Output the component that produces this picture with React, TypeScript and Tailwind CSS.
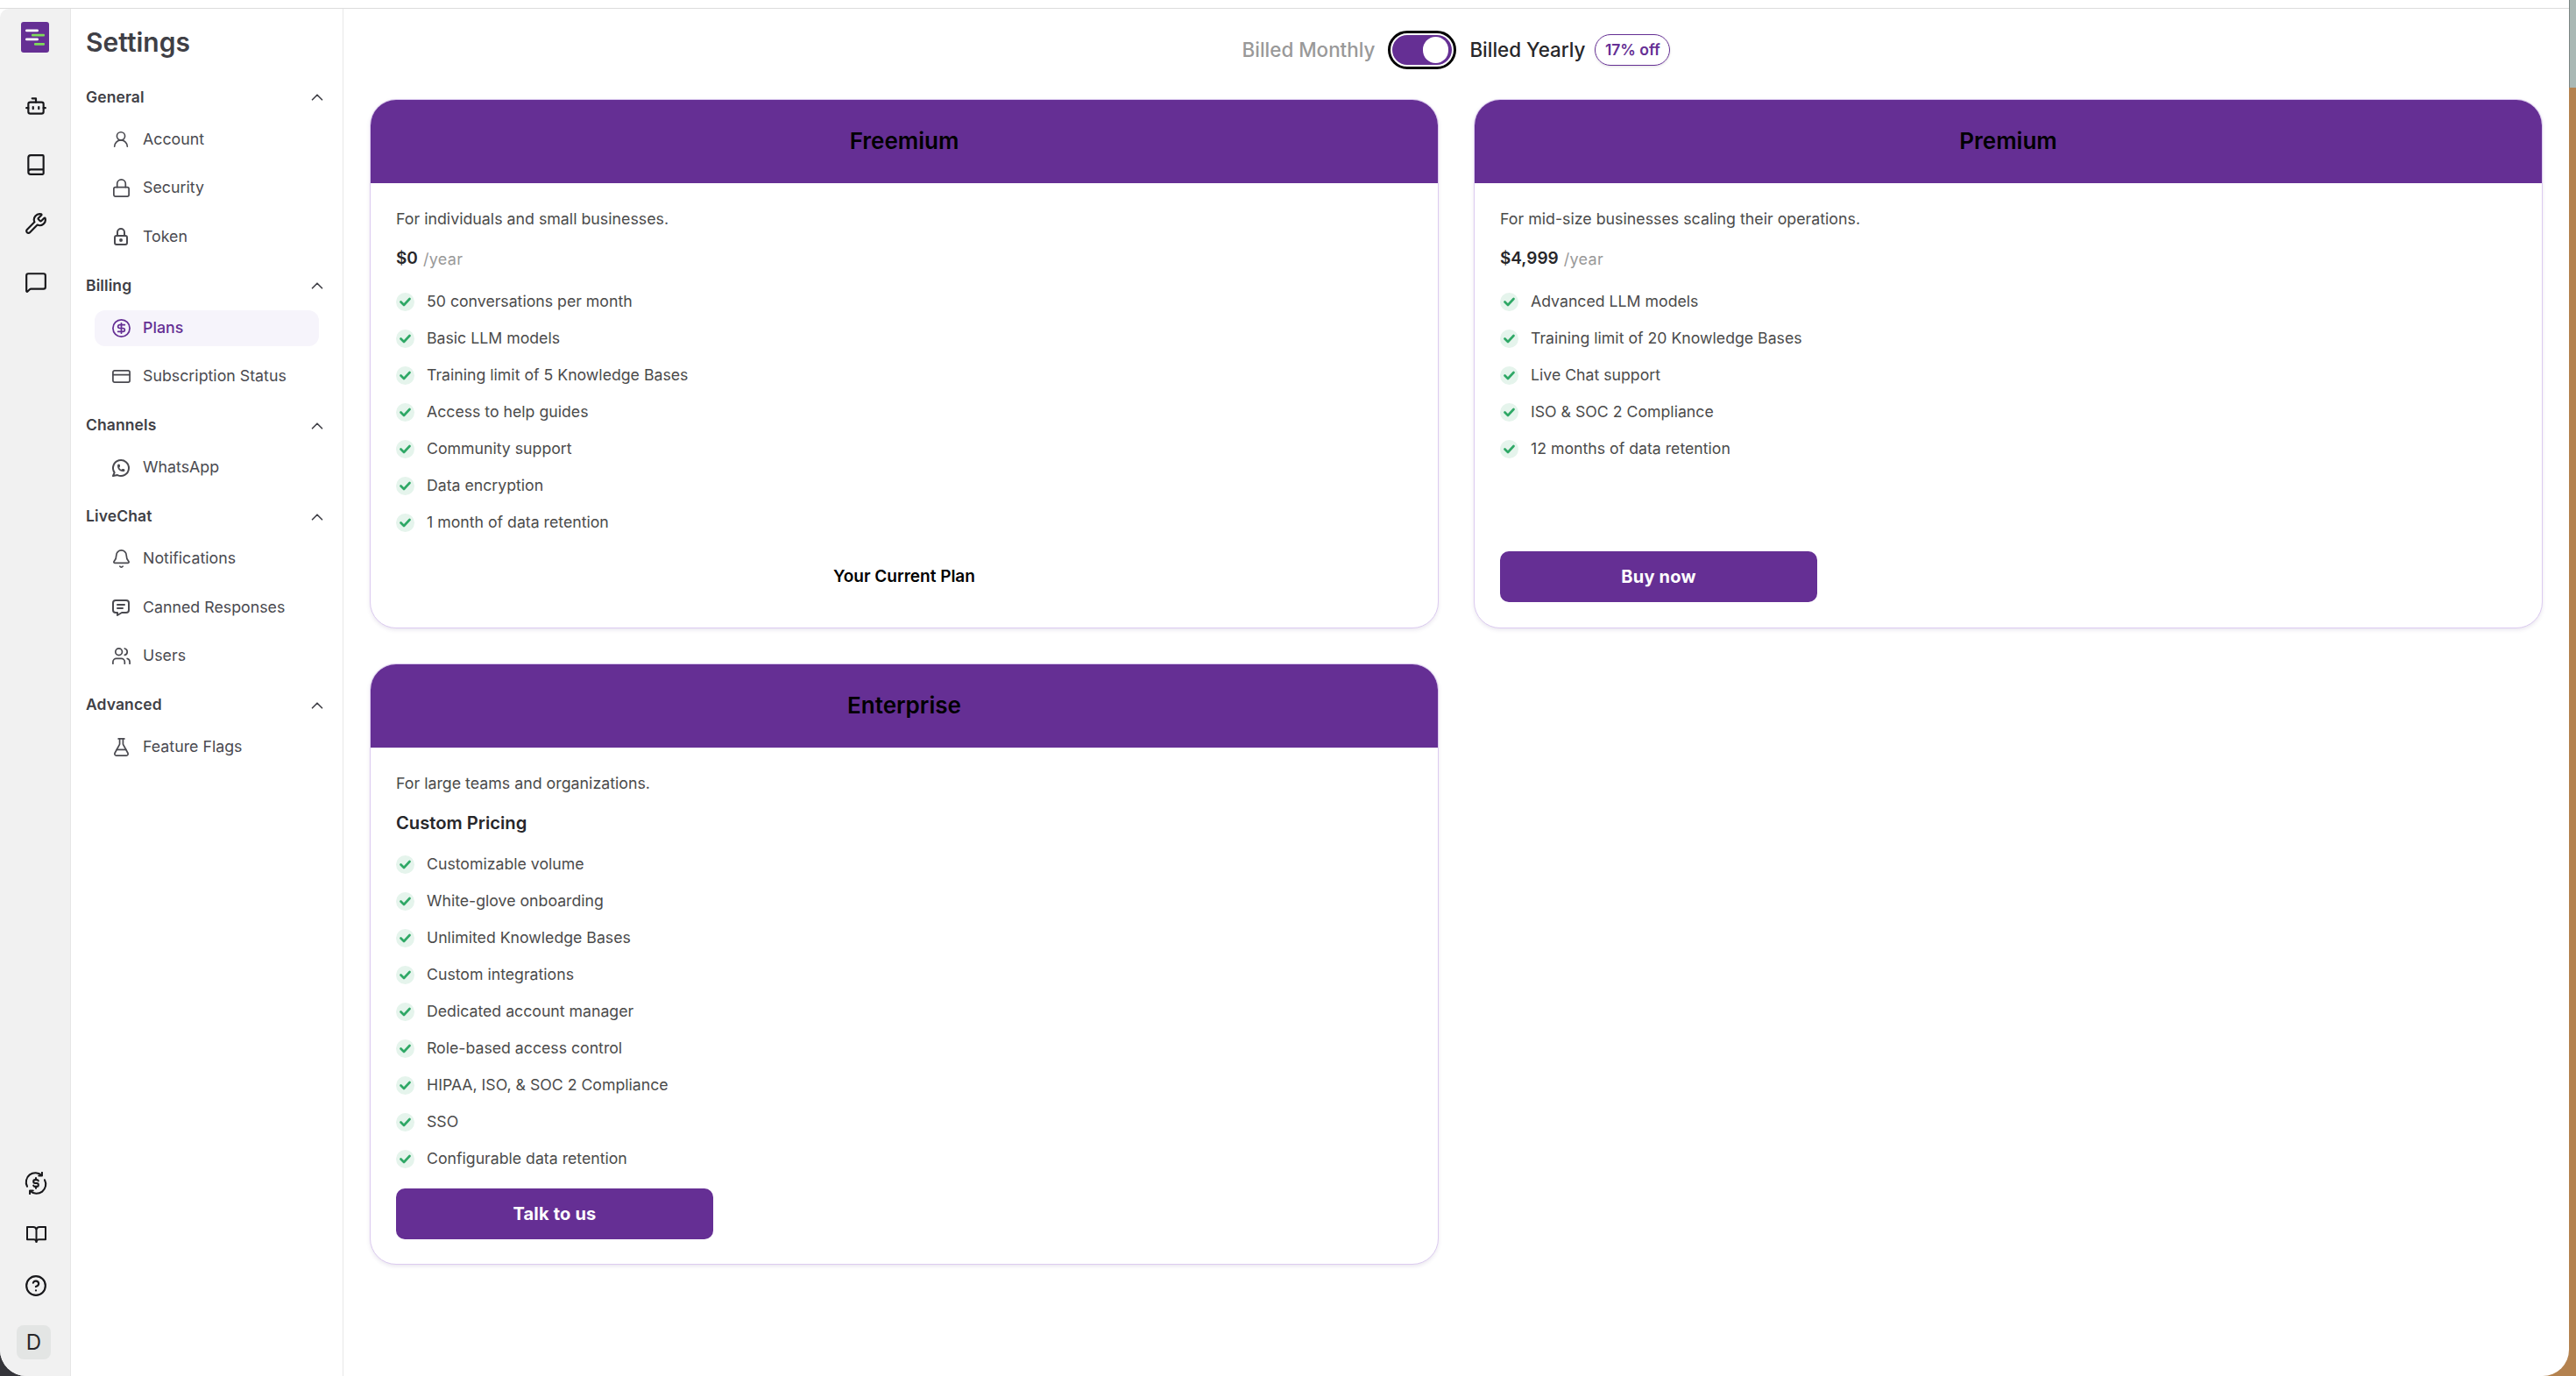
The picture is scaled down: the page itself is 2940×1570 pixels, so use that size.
import { Book, Bot, ChevronUp, CircleDollarSign, CircleHelp, CreditCard, FlaskConical, Bell, Lock, MessageSquare, Users, UserRound, Wrench } from 'lucide-react';
import { TbBrandWhatsapp, TbLock, TbMessage } from 'react-icons/tb';
import type { ReactNode } from 'react';

const font = 'font-["Inter","Liberation_Sans",sans-serif]';

function Logo() {
  return (
    <svg width="32" height="35" viewBox="0 0 32 35">
      <rect width="32" height="35" rx="3" fill="#652f94" />
      <rect x="5" y="8.5" width="15" height="2.8" rx="1.4" fill="#fff" />
      <rect x="12" y="13.7" width="15" height="2.8" rx="1" fill="#7fdc5a" />
      <rect x="5" y="18.5" width="15" height="2.8" rx="1.4" fill="#fff" />
      <rect x="15" y="24" width="12" height="2.8" rx="1" fill="#7fdc5a" />
    </svg>
  );
}

function MoneySwap() {
  return (
    <svg width="26" height="26" viewBox="0 0 24 24" fill="none" stroke="#18181b" strokeWidth="1.9" strokeLinecap="round" strokeLinejoin="round">
      <path d="M2.8 15.5A9.8 9.8 0 0 1 18 3.6" />
      <path d="M21.2 8.5A9.8 9.8 0 0 1 6 20.4" />
      <path d="M18.4 .8v3.4H15" />
      <path d="M5.6 23.2v-3.4H9" />
      <path d="M14.6 9.6a1.9 1.9 0 0 0-1.8-1.2h-1.6a1.8 1.8 0 0 0 0 3.6h1.6a1.8 1.8 0 0 1 0 3.6h-1.6a1.9 1.9 0 0 1-1.8-1.2" />
      <path d="M12 6.6v1.8M12 15.6v1.8" />
    </svg>
  );
}

function OpenBook() {
  return (
    <svg width="23" height="21" viewBox="0 0 24 22" fill="none" stroke="#18181b" strokeWidth="2.1" strokeLinecap="round" strokeLinejoin="round">
      <path d="M1 2h7a4 4 0 0 1 4 2.5A4 4 0 0 1 16 2h7v15h-8a3 3 0 0 0-3 3 3 3 0 0 0-3-3H1z" />
      <path d="M12 4.5V20" />
    </svg>
  );
}

const navGroups = [
  {
    title: 'General',
    items: [
      { label: 'Account', icon: <UserRound size={22} strokeWidth={1.8} /> },
      { label: 'Security', icon: <Lock size={23} strokeWidth={1.8} /> },
      { label: 'Token', icon: <TbLock size={24} /> },
    ],
  },
  {
    title: 'Billing',
    items: [
      { label: 'Plans', icon: <CircleDollarSign size={23} strokeWidth={1.8} />, active: true },
      { label: 'Subscription Status', icon: <CreditCard size={23} strokeWidth={1.8} /> },
    ],
  },
  { title: 'Channels', items: [{ label: 'WhatsApp', icon: <TbBrandWhatsapp size={24} /> }] },
  {
    title: 'LiveChat',
    items: [
      { label: 'Notifications', icon: <Bell size={23} strokeWidth={1.8} /> },
      { label: 'Canned Responses', icon: <TbMessage size={24} /> },
      { label: 'Users', icon: <Users size={23} strokeWidth={1.8} /> },
    ],
  },
  { title: 'Advanced', items: [{ label: 'Feature Flags', icon: <FlaskConical size={23} strokeWidth={1.8} /> }] },
];

function Rail() {
  return (
    <aside className="flex w-[81px] shrink-0 flex-col items-center rounded-tl-[10px] border-r border-[#e6e6e6] bg-[#f1f1f1] pt-[15px] pb-[19px]">
      <div className="flex h-[35px]"><Logo /></div>
      <div className="mt-[48px] flex flex-col items-center gap-[41px] pl-[2px] text-[#18181b]">
        <Bot size={26} strokeWidth={2} />
        <Book size={26} strokeWidth={2} />
        <Wrench size={26} strokeWidth={2} />
        <MessageSquare size={26} strokeWidth={2} />
      </div>
      <div className="mt-auto flex flex-col items-center gap-[32.5px] pl-[2px]">
        <span className="flex h-[26px] items-center"><MoneySwap /></span>
        <span className="flex h-[26px] items-center"><OpenBook /></span>
        <span className="flex h-[26px] items-center"><CircleHelp size={26} strokeWidth={2} className="text-[#18181b]" /></span>
      </div>
      <div className="mt-[32px] mr-[3px] flex h-[39px] w-[39px] items-center justify-center rounded-[8px] bg-[#e3e5e4] text-[24px] text-[#27272a]">D</div>
    </aside>
  );
}

function Sidebar() {
  return (
    <nav className="w-[311px] shrink-0 border-r border-[#e8e8e8] bg-white pl-[17px] pr-[18px]">
      <h1 className="mt-[16px] text-[30px] leading-[44px] font-semibold text-[#3f3f46]">Settings</h1>
      <div className="mt-[30px] flex flex-col gap-[24.5px]">
        {navGroups.map((group) => (
          <section key={group.title}>
            <div className="flex h-[22px] items-center justify-between">
              <span className="text-[17.5px] font-semibold tracking-[0.1px] text-[#3f3f46]">{group.title}</span>
              <ChevronUp size={22} strokeWidth={1.8} className="text-[#3f3f46]" />
            </div>
            <ul className="mt-[16.5px] flex flex-col gap-[14.5px]">
              {group.items.map((item) => (
                <li
                  key={item.label}
                  className={`ml-[10px] flex h-[41px] w-[256px] items-center gap-[13px] rounded-[12px] pl-[18px] text-[17.8px] ${
                    item.active ? 'bg-[#f6f4fb] font-medium text-[#652f94]' : 'text-[#4a4a50]'
                  }`}
                >
                  <span className="flex w-[24px] justify-center">{item.icon}</span>
                  {item.label}
                </li>
              ))}
            </ul>
          </section>
        ))}
      </div>
    </nav>
  );
}

function Feature({ children }: { children: ReactNode }) {
  return (
    <li className="flex h-[21px] items-center gap-[14px] text-[17.7px] text-[#4b4b4b]">
      <span className="flex h-[21px] w-[21px] shrink-0 items-center justify-center rounded-full bg-[#e5f4ec]">
        <svg width="13" height="11" viewBox="0 0 13 11" fill="none" stroke="#2fa866" strokeWidth="2.6" strokeLinecap="round" strokeLinejoin="round">
          <path d="M1.5 5.5l3.5 3.5 6.5-7" />
        </svg>
      </span>
      {children}
    </li>
  );
}

function PlanCard({ title, description, price, custom, features, footer }: {
  title: string;
  description: string;
  price?: string;
  custom?: string;
  features: string[];
  footer: ReactNode;
}) {
  return (
    <section className="flex h-full flex-col overflow-hidden rounded-[30px] border border-[#dccbf0] bg-white shadow-[0_2px_4px_rgba(80,60,120,0.12)]">
      <header className="-mx-[1px] -mt-[1px] flex h-[96px] items-center justify-center bg-[#652f94] pb-[1px] text-[26px] font-semibold text-black">{title}</header>
      <div className="flex flex-1 flex-col px-[29px]">
        <p className="mt-[31px] text-[17.8px] leading-[20px] text-[#4b4b4b]">{description}</p>
        {price ? (
          <p className="mt-[25px] flex h-[20px] items-center gap-[6px] text-[#999]">
            <span className="text-[19px] font-semibold text-[#27272a]">{price}</span>
            <span className="text-[18px] tracking-[0.3px]">/year</span>
          </p>
        ) : (
          <p className="mt-[22px] h-[26px] text-[20.2px] leading-[26px] font-semibold text-[#27272a]">{custom}</p>
        )}
        <ul className={`flex flex-col gap-[21px] ${price ? 'mt-[29px]' : 'mt-[24px]'}`}>
          {features.map((f) => <Feature key={f}>{f}</Feature>)}
        </ul>
        <div className={`mt-auto ${price ? 'pb-[29.5px]' : 'pb-[28.5px]'}`}>{footer}</div>
      </div>
    </section>
  );
}

function PlanButton({ children }: { children: ReactNode }) {
  return (
    <button className="h-[58px] w-[362px] rounded-[10px] bg-[#652f94] text-[20px] font-bold tracking-[0.2px] text-white">{children}</button>
  );
}

export default function App() {
  return (
    <div className={`${font} flex h-[1570px] w-[2940px] overflow-hidden bg-gradient-to-r from-[#35353a] from-50% to-[#b4824f] to-50%`}>
      <div className="flex h-full w-[2932px] flex-col overflow-hidden rounded-b-[30px] bg-white">
        <div className="h-[10px] shrink-0 border-b border-[#dcdcdc]" />
        <div className="flex min-h-0 flex-1">
          <Rail />
          <Sidebar />
          <main className="flex-1 px-[30px]">
            <div className="mt-[25px] flex h-[44px] items-center justify-center text-[22.4px] font-medium">
              <span className="text-[#999]">Billed Monthly</span>
              <span className="mx-[15px] flex h-[44px] w-[78px] items-center rounded-full border-[3px] border-black p-[2px]">
                <span className="flex h-full w-full items-center justify-end rounded-full bg-[#652f94] pr-[4px]">
                  <span className="h-[30px] w-[29px] rounded-full bg-white" />
                </span>
              </span>
              <span className="text-[#27272a]">Billed Yearly</span>
              <span className="ml-[11px] flex h-[36px] w-[86px] items-center justify-center rounded-full border border-[#652f94] text-[17.5px] font-semibold text-[#652f94] shadow-[0_1px_3px_rgba(0,0,0,0.12)]">17% off</span>
            </div>
            <div className="mt-[34px] grid grid-cols-2 gap-[40px]">
              <div className="h-[604px]">
                <PlanCard
                  title="Freemium"
                  description="For individuals and small businesses."
                  price="$0"
                  features={['50 conversations per month', 'Basic LLM models', 'Training limit of 5 Knowledge Bases', 'Access to help guides', 'Community support', 'Data encryption', '1 month of data retention']}
                  footer={<p className="text-center text-[19px] leading-[58px] font-semibold text-black">Your Current Plan</p>}
                />
              </div>
              <div className="h-[604px]">
                <PlanCard
                  title="Premium"
                  description="For mid-size businesses scaling their operations."
                  price="$4,999"
                  features={['Advanced LLM models', 'Training limit of 20 Knowledge Bases', 'Live Chat support', 'ISO & SOC 2 Compliance', '12 months of data retention']}
                  footer={<PlanButton>Buy now</PlanButton>}
                />
              </div>
              <div className="h-[686px]">
                <PlanCard
                  title="Enterprise"
                  description="For large teams and organizations."
                  custom="Custom Pricing"
                  features={['Customizable volume', 'White-glove onboarding', 'Unlimited Knowledge Bases', 'Custom integrations', 'Dedicated account manager', 'Role-based access control', 'HIPAA, ISO, & SOC 2 Compliance', 'SSO', 'Configurable data retention']}
                  footer={<PlanButton>Talk to us</PlanButton>}
                />
              </div>
            </div>
          </main>
        </div>
      </div>
      <div className="flex w-[8px] flex-col">
        <div className="h-[100px] border-l border-[#7c8583] bg-[#a9b8b4]" />
        <div className="flex-1 bg-[#b4824f]" />
      </div>
    </div>
  );
}
